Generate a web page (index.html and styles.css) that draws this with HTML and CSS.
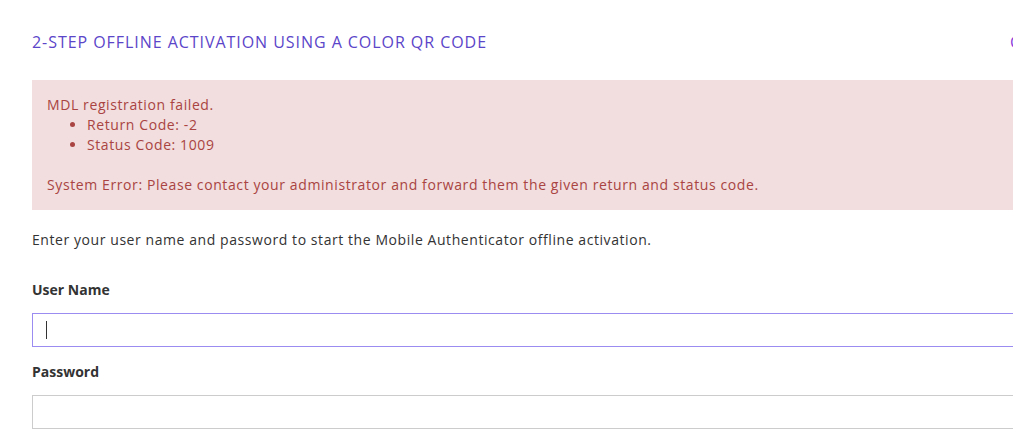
FILE: index.html
```html
<!DOCTYPE html>
<html>
<head>
<meta charset="utf-8">
<link rel="stylesheet" href="styles.css">
</head>
<body>
<div class="page">
  <div class="header">
    <h1 class="title">2-STEP OFFLINE ACTIVATION USING A COLOR QR CODE</h1>
    <span class="side">C</span>
  </div>
  <div class="alert">
    <div>MDL registration failed.</div>
    <ul class="codes">
      <li>Return Code: -2</li>
      <li>Status Code: 1009</li>
    </ul>
    <div>System Error: Please contact your administrator and forward them the given return and status code.</div>
  </div>
  <p class="intro">Enter your user name and password to start the Mobile Authenticator offline activation.</p>
  <div class="field">
    <label class="label">User Name</label>
    <div class="input focused"><span class="caret"></span></div>
  </div>
  <div class="field">
    <label class="label">Password</label>
    <div class="input"></div>
  </div>
</div>
</body>
</html>
```
FILE: styles.css
```css
html, body {
  margin: 0;
  padding: 0;
  background: #ffffff;
  overflow: hidden;
}
.page {
  width: 1100px;
  padding: 0 0 0 32px;
  font-family: "Open Sans", "Liberation Sans", sans-serif;
  color: #333333;
}
.header {
  display: grid;
  grid-template-columns: 978px auto;
  align-items: center;
  height: 80px;
}
.title {
  margin: 0;
  font-weight: 400;
  font-size: 16px;
  letter-spacing: 0.95px;
  color: #5b45c9;
  line-height: 20px;
  padding-top: 4px;
}
.side {
  color: #8a3ddb;
  font-size: 16px;
  line-height: 20px;
  padding-top: 4px;
}
.alert {
  background: #f2dede;
  color: #a94442;
  padding: 15px;
  font-size: 14px;
  letter-spacing: 0.6px;
  line-height: 20px;
}
.codes {
  margin: 0 0 20px 0;
  padding-left: 40px;
}
.intro {
  margin: 20px 0 0 0;
  font-size: 14px;
  letter-spacing: 0.57px;
  line-height: 20px;
  color: #333333;
}
.field {
  display: flex;
  flex-direction: column;
}
.label {
  font-weight: 700;
  font-size: 14px;
  line-height: 20px;
  color: #333333;
  margin-top: 30px;
  margin-bottom: 13px;
}
.field + .field .label {
  margin-top: 15px;
}
.input {
  height: 32px;
  border: 1px solid #cccccc;
  display: flex;
  align-items: center;
  padding-left: 13px;
}
.input.focused {
  border-color: #9b8cf2;
}
.caret {
  width: 1px;
  height: 18px;
  background: #333333;
}
```
